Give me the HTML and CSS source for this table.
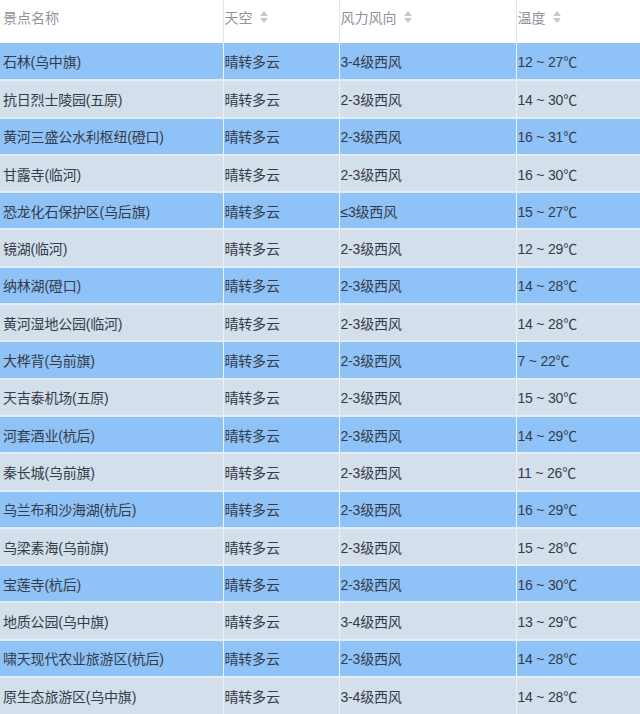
FILE: index.html
```html
<!DOCTYPE html>
<html lang="zh">
<head>
<meta charset="utf-8">
<title>景点天气</title>
<link rel="stylesheet" href="styles.css">
</head>
<body>
<table class="weather">
  <colgroup>
    <col class="c1"><col class="c2"><col class="c3"><col class="c4">
  </colgroup>
  <thead>
    <tr>
      <th>景点名称</th>
      <th><span class="hd">天空<span class="sort"><i class="up"></i><i class="down"></i></span></span></th>
      <th><span class="hd">风力风向<span class="sort"><i class="up"></i><i class="down"></i></span></span></th>
      <th><span class="hd">温度<span class="sort"><i class="up"></i><i class="down"></i></span></span></th>
    </tr>
  </thead>
  <tbody>
    <tr><td>石林(乌中旗)</td><td>晴转多云</td><td>3-4级西风</td><td>12 ~ 27℃</td></tr>
    <tr><td>抗日烈士陵园(五原)</td><td>晴转多云</td><td>2-3级西风</td><td>14 ~ 30℃</td></tr>
    <tr><td>黄河三盛公水利枢纽(磴口)</td><td>晴转多云</td><td>2-3级西风</td><td>16 ~ 31℃</td></tr>
    <tr><td>甘露寺(临河)</td><td>晴转多云</td><td>2-3级西风</td><td>16 ~ 30℃</td></tr>
    <tr><td>恐龙化石保护区(乌后旗)</td><td>晴转多云</td><td>≤3级西风</td><td>15 ~ 27℃</td></tr>
    <tr><td>镜湖(临河)</td><td>晴转多云</td><td>2-3级西风</td><td>12 ~ 29℃</td></tr>
    <tr><td>纳林湖(磴口)</td><td>晴转多云</td><td>2-3级西风</td><td>14 ~ 28℃</td></tr>
    <tr><td>黄河湿地公园(临河)</td><td>晴转多云</td><td>2-3级西风</td><td>14 ~ 28℃</td></tr>
    <tr><td>大桦背(乌前旗)</td><td>晴转多云</td><td>2-3级西风</td><td>7 ~ 22℃</td></tr>
    <tr><td>天吉泰机场(五原)</td><td>晴转多云</td><td>2-3级西风</td><td>15 ~ 30℃</td></tr>
    <tr><td>河套酒业(杭后)</td><td>晴转多云</td><td>2-3级西风</td><td>14 ~ 29℃</td></tr>
    <tr><td>秦长城(乌前旗)</td><td>晴转多云</td><td>2-3级西风</td><td>11 ~ 26℃</td></tr>
    <tr><td>乌兰布和沙海湖(杭后)</td><td>晴转多云</td><td>2-3级西风</td><td>16 ~ 29℃</td></tr>
    <tr><td>乌梁素海(乌前旗)</td><td>晴转多云</td><td>2-3级西风</td><td>15 ~ 28℃</td></tr>
    <tr><td>宝莲寺(杭后)</td><td>晴转多云</td><td>2-3级西风</td><td>16 ~ 30℃</td></tr>
    <tr><td>地质公园(乌中旗)</td><td>晴转多云</td><td>3-4级西风</td><td>13 ~ 29℃</td></tr>
    <tr><td>啸天现代农业旅游区(杭后)</td><td>晴转多云</td><td>2-3级西风</td><td>14 ~ 28℃</td></tr>
    <tr><td>原生态旅游区(乌中旗)</td><td>晴转多云</td><td>3-4级西风</td><td>14 ~ 28℃</td></tr>
  </tbody>
</table>
</body>
</html>
```
FILE: styles.css
```css
html, body {
  margin: 0;
  padding: 0;
  background: #ffffff;
}
body {
  font-family: "Liberation Sans", "Noto Sans CJK SC", sans-serif;
  font-size: 14px;
  overflow: hidden;
}
.weather {
  width: 640px;
  border-collapse: collapse;
  table-layout: fixed;
}
.c1 { width: 223px; }
.c2 { width: 116px; }
.c3 { width: 177px; }
.c4 { width: 124px; }
.weather th {
  height: 43px;
  padding: 0 0 10px 1px;
  text-align: left;
  font-weight: normal;
  color: #8f939b;
  background: #ffffff;
  border-left: 1px solid #e4e6ea;
  box-sizing: border-box;
  vertical-align: middle;
}
.hd {
  display: inline-flex;
  align-items: center;
}
.weather th:first-child,
.weather td:first-child {
  border-left: none;
  padding-left: 3px;
}
.weather td {
  height: 37.3px;
  padding: 0 0 0 1px;
  color: #353b48;
  border-left: 1px solid #eaf2fa;
  border-top: 2px solid #e4eef8;
  box-sizing: border-box;
  vertical-align: middle;
  white-space: nowrap;
  letter-spacing: -0.2px;
}
.weather tbody tr:nth-child(odd) td { background: #8fc3f8; }
.weather tbody tr:nth-child(even) td { background: #d3dfeb; }
.weather tbody tr:first-child td { border-top: none; }
.sort {
  display: inline-flex;
  flex-direction: column;
  gap: 2px;
  margin-left: 7px;
}
.sort i {
  display: block;
  width: 0;
  height: 0;
  border-left: 4px solid transparent;
  border-right: 4px solid transparent;
}
.sort .up { border-bottom: 5px solid #c5c8ce; }
.sort .down { border-top: 5px solid #c5c8ce; }
```
